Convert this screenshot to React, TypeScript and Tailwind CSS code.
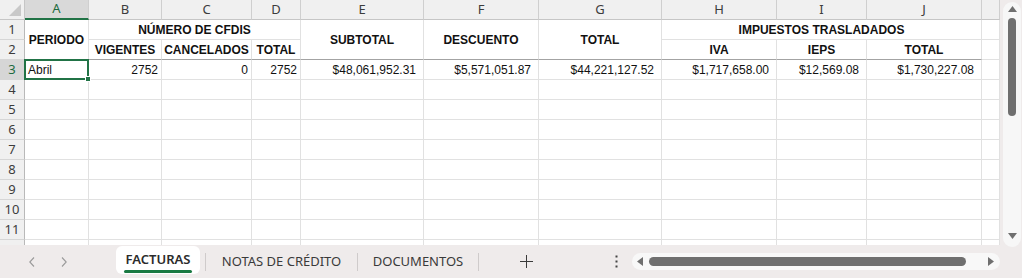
import { FunctionComponent, ReactNode } from "react";

const colLetters = ["A", "B", "C", "D", "E", "F", "G", "H", "I", "J", ""];

const dataRow = [
  { text: "Abril", align: "left" },
  { text: "2752", align: "num" },
  { text: "0", align: "num" },
  { text: "2752", align: "num" },
  { text: "$48,061,952.31", align: "money" },
  { text: "$5,571,051.87", align: "money" },
  { text: "$44,221,127.52", align: "money" },
  { text: "$1,717,658.00", align: "money" },
  { text: "$12,569.08", align: "money" },
  { text: "$1,730,227.08", align: "money" },
  { text: "", align: "left" },
];

const cellBase = "border-r border-b border-[#e1e1e1] bg-white flex items-center text-[#111] whitespace-nowrap overflow-hidden";
const headText = "font-bold justify-center";
const darkBottom = "border-b-[#a3a3a3]";

const RowHead: FunctionComponent<{ n?: number; active?: boolean }> = ({ n, active }) => (
  <div
    className={`flex items-center justify-center border-r border-b border-r-[#b9b9b9] border-b-[#d6d6d6] text-[13px] ${
      active ? "bg-[#d6d6d6] text-[#1d6b3f]" : "bg-[#f0f0f0] text-[#3c3c3c]"
    }`}
    style={{ fontFamily: '"Noto Sans", sans-serif' }}
  >
    {n}
  </div>
);

const Cell: FunctionComponent<{ className?: string; children?: ReactNode }> = ({ className = "", children }) => (
  <div className={`${cellBase} ${className}`}>{children}</div>
);

const Chevron: FunctionComponent<{ dir: "left" | "right" }> = ({ dir }) => (
  <svg width="8" height="12" viewBox="0 0 8 12" fill="none">
    <path
      d={dir === "left" ? "M6 1.5 L1.8 6 L6 10.5" : "M2 1.5 L6.2 6 L2 10.5"}
      stroke="#9a9a9a"
      strokeWidth="1.1"
    />
  </svg>
);

export default function App() {
  return (
    <div className="w-[1022px] h-[278px] overflow-hidden bg-[#efebeb]" style={{ fontFamily: '"Liberation Sans", Arial, sans-serif' }}>
      <div className="flex h-[245px]">
        {/* sheet grid */}
        <div className="w-[1000px] h-[245px] overflow-hidden bg-white">
          <div className="grid grid-cols-[25px_64px_73px_90px_49px_123px_115px_123px_115px_90px_115px_18px] grid-rows-[repeat(13,20px)] text-[12px]">
            {/* column headers */}
            <div className="relative bg-[#f0f0f0] border-r border-b border-[#c6c6c6]">
              <svg className="absolute right-[3px] bottom-[3px]" width="12" height="12" viewBox="0 0 12 12">
                <path d="M12 0 L12 12 L0 12 Z" fill="#c8c8c8" />
              </svg>
            </div>
            {colLetters.map((c, i) => (
              <div
                key={c + i}
                className={`flex items-center justify-center border-r border-b text-[13px] ${
                  i === 0
                    ? "bg-[#d9d9d9] text-[#1d6b3f] border-r-[#cfcfcf] border-b-2 border-b-[#217346]"
                    : "bg-[#f0f0f0] text-[#3c3c3c] border-[#cfcfcf] border-b-[#c6c6c6]"
                }`}
                style={{ fontFamily: '"Noto Sans", sans-serif' }}
              >
                {c}
              </div>
            ))}

            {/* row 1 */}
            <RowHead n={1} />
            <Cell className={`row-span-2 ${headText} ${darkBottom}`}>PERIODO</Cell>
            <Cell className={`col-span-3 ${headText}`}>NÚMERO DE CFDIS</Cell>
            <Cell className={`row-span-2 ${headText} ${darkBottom}`}>SUBTOTAL</Cell>
            <Cell className={`row-span-2 ${headText} ${darkBottom}`}>DESCUENTO</Cell>
            <Cell className={`row-span-2 ${headText} ${darkBottom}`}>TOTAL</Cell>
            <Cell className={`col-span-3 ${headText}`}>IMPUESTOS TRASLADADOS</Cell>
            <Cell />

            {/* row 2 */}
            <RowHead n={2} />
            <Cell className={`${headText} ${darkBottom}`}>VIGENTES</Cell>
            <Cell className={`${headText} ${darkBottom}`}>CANCELADOS</Cell>
            <Cell className={`${headText} ${darkBottom}`}>TOTAL</Cell>
            <Cell className={`${headText} ${darkBottom}`}>IVA</Cell>
            <Cell className={`${headText} ${darkBottom}`}>IEPS</Cell>
            <Cell className={`${headText} ${darkBottom}`}>TOTAL</Cell>
            <Cell />

            {/* row 3 */}
            <RowHead n={3} active />
            {dataRow.map((d, i) => (
              <Cell
                key={i}
                className={`${
                  d.align === "left" ? "justify-start pl-[3px]" : d.align === "num" ? "justify-end pr-[3px]" : "justify-end pr-[7px]"
                } ${i === 0 ? "relative overflow-visible z-10" : ""}`}
              >
                {d.text}
                {i === 0 && (
                  <div className="absolute -top-px -left-px -right-px -bottom-px border-2 border-[#217346]">
                    <div className="absolute -right-[4px] -bottom-[4px] w-[6px] h-[6px] bg-[#217346] border border-white" />
                  </div>
                )}
              </Cell>
            ))}

            {/* rows 4-12 */}
            {[4, 5, 6, 7, 8, 9, 10, 11, 0].map((n) => (
              <div key={n} className="contents">
                <RowHead n={n || undefined} />
                {colLetters.map((c, i) => (
                  <Cell key={c + i} />
                ))}
              </div>
            ))}
          </div>
        </div>

        {/* vertical scrollbar */}
        <div className="w-[22px] pl-[3px] pt-[2px]">
          <div className="w-[18px] h-[245px] rounded-full bg-[#f7f7f7] flex flex-col items-center">
            <svg className="mt-[4px]" width="9" height="6" viewBox="0 0 9 6">
              <path d="M4.5 0 L9 6 L0 6 Z" fill="#6f6f6f" />
            </svg>
            <div className="mt-[6px] w-[8px] h-[98px] rounded-full bg-[#6f6f6f]" />
            <div className="flex-1" />
            <svg className="mb-[8px]" width="9" height="6" viewBox="0 0 9 6">
              <path d="M0 0 L9 0 L4.5 6 Z" fill="#6f6f6f" />
            </svg>
          </div>
        </div>
      </div>

      {/* sheet tabs */}
      <div className="flex items-center h-[33px] text-[13px] text-[#3a3a3a]" style={{ fontFamily: '"Noto Sans", sans-serif' }}>
        <div className="w-[116px] flex items-center pl-[28px] gap-[24px]">
          <Chevron dir="left" />
          <Chevron dir="right" />
        </div>
        <div className="w-[84px] h-[28px] self-start mt-px bg-white rounded-md flex flex-col items-center justify-center">
          <span className="font-semibold text-[#2b2b2b] leading-[16px] mt-[3px]">FACTURAS</span>
          <div className="mt-[3px] w-[68px] h-[3px] rounded-full bg-[#1a7a43]" />
        </div>
        <div className="ml-[5px] w-px h-[18px] bg-[#cfcbcb]" />
        <div className="w-[151px] text-center">NOTAS DE CRÉDITO</div>
        <div className="w-px h-[18px] bg-[#cfcbcb]" />
        <div className="w-[120px] text-center">DOCUMENTOS</div>
        <div className="w-px h-[18px] bg-[#cfcbcb]" />
        <div className="w-[95px] flex justify-center">
          <svg width="13" height="13" viewBox="0 0 13 13">
            <path d="M6.5 0 V13 M0 6.5 H13" stroke="#3a3a3a" strokeWidth="1" />
          </svg>
        </div>
        <div className="w-[26px]" />
        <div className="w-[32px] flex justify-center">
          <svg width="3" height="13" viewBox="0 0 3 13">
            <rect x="0.5" y="0.5" width="2" height="2" fill="#444" />
            <rect x="0.5" y="5.5" width="2" height="2" fill="#444" />
            <rect x="0.5" y="10.5" width="2" height="2" fill="#444" />
          </svg>
        </div>
        <div className="w-[368px] h-[17px] rounded-full bg-[#f8f8f8] flex items-center">
          <svg className="ml-[5px]" width="6" height="9" viewBox="0 0 6 9">
            <path d="M0 4.5 L6 0 L6 9 Z" fill="#6f6f6f" />
          </svg>
          <div className="ml-[6px] w-[317px] h-[9px] rounded-full bg-[#6f6f6f]" />
          <div className="flex-1" />
          <svg className="mr-[6px]" width="6" height="9" viewBox="0 0 6 9">
            <path d="M0 0 L6 4.5 L0 9 Z" fill="#6f6f6f" />
          </svg>
        </div>
      </div>
    </div>
  );
}
